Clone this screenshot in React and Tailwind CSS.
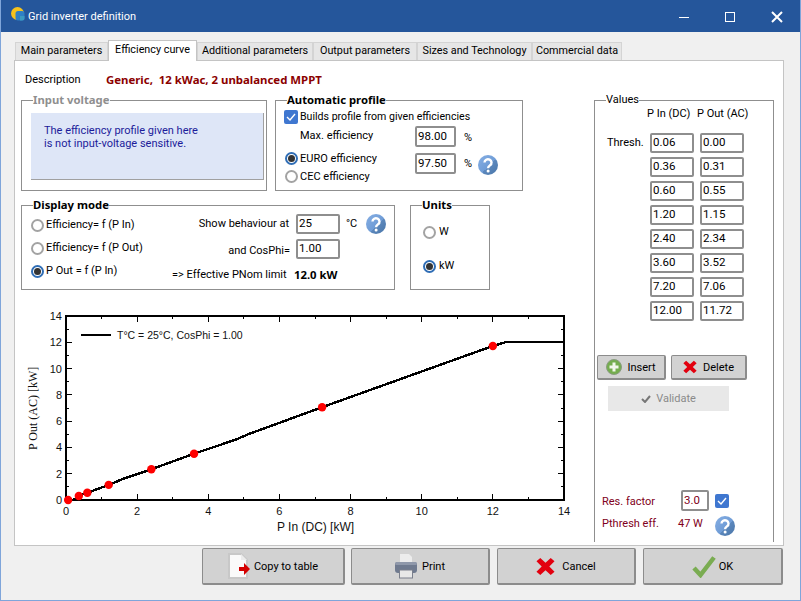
import React from "react";

const ui = { fontFamily: 'Roboto, sans-serif' };
const boldFont = { fontFamily: '"Noto Sans", sans-serif' };

const HelpIcon = () => (
  <svg width="20" height="20" viewBox="0 0 20 20" className="shrink-0">
    <defs>
      <linearGradient id="helpBg" x1="0" y1="0" x2="1" y2="1">
        <stop offset="0" stopColor="#86afe4" />
        <stop offset="0.55" stopColor="#6f9cd6" />
        <stop offset="0.55" stopColor="#5c88bd" />
        <stop offset="1" stopColor="#4a76a8" />
      </linearGradient>
    </defs>
    <circle cx="10" cy="10" r="10" fill="url(#helpBg)" />
    <path d="M6.5 7.5a3.5 3.3 0 1 1 5.6 2.7c-1.2.9-2 1.4-2 3" fill="none" stroke="#fff" strokeWidth="2.4" />
    <circle cx="10.1" cy="16" r="1.5" fill="#fff" />
  </svg>
);

const Radio = ({ on }) => (
  <span
    className={`flex h-[13px] w-[13px] shrink-0 items-center justify-center rounded-full border-2 bg-white ${
      on ? "border-[#2f6db5]" : "border-[#a3a3a3]"
    }`}
  >
    {on && <span className="h-[7px] w-[7px] rounded-full bg-[#333]" />}
  </span>
);

const CheckBox = ({ className = "" }) => (
  <span className={`flex h-[14px] w-[14px] shrink-0 items-center justify-center rounded-[2px] bg-[#3f77d0] ${className}`}>
    <svg width="10" height="8" viewBox="0 0 10 8">
      <path d="M1 4l3 3 5-6" fill="none" stroke="#fff" strokeWidth="1.4" />
    </svg>
  </span>
);

const Box = ({ value, className = "h-[20px] w-[44px]", color = "text-black" }) => (
  <div className={`flex items-center rounded-[2px] border-2 border-[#8e8e8e] bg-white pl-[1px] text-[11.5px] ${color} ${className}`}>
    {value}
  </div>
);

const Group = ({ title, className, legendClass = "font-bold", children }) => (
  <fieldset className={`border border-[#8f8f8f] ${className}`}>
    <legend
      className={`ml-[11px] h-[14px] leading-[14px] ${legendClass}`}
      style={legendClass.includes("font-normal") ? undefined : boldFont}
    >
      {title}
    </legend>
    {children}
  </fieldset>
);

const tabs = [
  ["Main parameters", "w-[93px]"],
  ["Efficiency curve", "w-[89px]"],
  ["Additional parameters", "w-[116px]"],
  ["Output parameters", "w-[104px]"],
  ["Sizes and Technology", "w-[115px]"],
  ["Commercial data", "w-[90px]"],
];

const values = [
  ["0.06", "0.00"],
  ["0.36", "0.31"],
  ["0.60", "0.55"],
  ["1.20", "1.15"],
  ["2.40", "2.34"],
  ["3.60", "3.52"],
  ["7.20", "7.06"],
  ["12.00", "11.72"],
];

// chart scale, same pixel grid as the plot frame
const px = (x) => 41 + x * (498 / 14);
const py = (y) => 195 - y * (184 / 14);

const dots = values.map(([a, b]) => [Number(a), Number(b)]);
const curve = [
  [0.2, 0], [0.36, 0.31], [0.6, 0.55], [1.2, 1.15], [1.6, 1.6], [2.4, 2.34], [3.6, 3.52],
  [4.8, 4.62], [5.1, 4.98], [7.2, 7.06], [12, 11.72], [12.35, 12], [14, 12],
];
const range = Array.from({ length: 15 }, (_, i) => i);

const Chart = () => (
  <svg width="570" height="235" viewBox="0 0 570 235" className="block">
    <g stroke="#000" strokeWidth="1" shapeRendering="crispEdges">
      {range.map((i) => {
        const len = i % 2 === 0 ? 6 : 3;
        return (
          <g key={i}>
            <line x1={px(i)} x2={px(i)} y1={195} y2={195 - len} />
            <line x1={px(i)} x2={px(i)} y1={11} y2={11 + len} />
            <line x1={41} x2={41 + len} y1={py(i)} y2={py(i)} />
            <line x1={539} x2={539 - len} y1={py(i)} y2={py(i)} />
          </g>
        );
      })}
    </g>
    <rect x="41" y="11" width="498" height="184" fill="none" stroke="#000" strokeWidth="2" shapeRendering="crispEdges" />
    <polyline
      points={curve.map(([x, y]) => `${px(x)},${py(y)}`).join(" ")}
      fill="none"
      stroke="#000"
      strokeWidth="2.4"
      shapeRendering="crispEdges"
    />
    {dots.map(([x, y]) => (
      <circle key={x} cx={px(x)} cy={py(y)} r="4.2" fill="#f00" />
    ))}
    <g fontFamily='"Liberation Sans", sans-serif' fontSize="11" fill="#111">
      {range.filter((i) => i % 2 === 0).map((i) => (
        <text key={i} x={px(i)} y="210" textAnchor="middle">{i}</text>
      ))}
      {range.filter((i) => i % 2 === 0).map((i) => (
        <text key={i} x="37" y={py(i) + 4} textAnchor="end">{i}</text>
      ))}
      <line x1="56" x2="86" y1="30" y2="30" stroke="#000" strokeWidth="2" />
      <text x="92" y="34" fontSize="10.5">T°C = 25°C, CosPhi = 1.00</text>
      <text x="252" y="226" fontSize="12">P In (DC) [kW]</text>
    </g>
    <text
      transform="translate(12 145) rotate(-90)"
      x="0"
      y="0"
      fontFamily='"Liberation Serif", serif'
      fontSize="12"
      fill="#111"
    >
      P Out (AC) [kW]
    </text>
  </svg>
);

const Btn = ({ className, icon, label, gap = "gap-[5px]" }) => (
  <button className={`flex items-center justify-center rounded-[2px] border border-r-2 border-b-2 border-[#8c8c8c] bg-[#d2d2d2] text-[11px] text-black ${gap} ${className}`}>
    {icon}
    <span className="pt-[2px]">{label}</span>
  </button>
);

const RedX = ({ size }) => (
  <svg width={size} height={size} viewBox="0 0 20 20">
    <path d="M4.5 1l5.5 5 5.5-5 4 3.500-5.500 5.500 5.500 5.500-4 3.500-5.500-5-5.500 5-4-3.500 5.500-5.500-5.500-5.500z" fill="#e2000f" />
  </svg>
);

export default function App() {
  return (
    <div
      className="flex h-[601px] w-[801px] flex-col overflow-hidden border-x border-b border-[#7fa5da] bg-[#f0f0f0] text-[11px] text-black"
      style={ui}
    >
      <div className="flex h-[32px] shrink-0 items-center bg-[#25569b] pl-[10px] pt-[2px] text-white">
        <svg width="14" height="14" viewBox="0 0 14 14" className="-mt-[6px]">
          <circle cx="6.5" cy="6.5" r="6.5" fill="#f6c21c" />
          <rect x="4.500" y="4" width="9" height="9.500" rx="2.500" fill="#2f7fc4" />
          <path d="M9 9h4.500v2a2.500 2.500 0 0 1-2.500 2.500H9z" fill="#3c9ac0" />
        </svg>
        <span className="ml-[3px] pt-[1px]">Grid inverter definition</span>
        <div className="ml-auto flex items-center">
          <span className="h-px w-[10px] bg-white" />
          <span className="ml-[36px] h-[10px] w-[10px] border border-white" />
          <svg width="12" height="12" viewBox="0 0 12 12" className="ml-[36px] mr-[17px]">
            <path d="M1 1l10 10M11 1L1 11" stroke="#fff" strokeWidth="2" />
          </svg>
        </div>
      </div>

      <div className="ml-[14px] mt-[8px] flex h-[20px] shrink-0 items-end text-[10.8px]">
        {tabs.map(([name, w], i) =>
          i === 1 ? (
            <div key={name} className={`relative z-10 -mb-px flex h-[21px] items-center justify-center whitespace-nowrap border border-b-0 border-[#c4c4c4] bg-white pb-[2px] ${w}`}>
              {name}
            </div>
          ) : (
            <div key={name} className={`flex h-[18px] items-center justify-center whitespace-nowrap border border-b-0 border-[#d4d4d4] bg-[#e6e6e6] ${w}`}>
              {name}
            </div>
          )
        )}
      </div>

      <div className="ml-[13px] flex h-[486px] w-[770px] shrink-0 border border-[#c4c4c4] bg-white">
        <div className="w-[579px] shrink-0 pl-[6px]">
          <div className="flex h-[20px] items-center pl-[4px] pt-[17px]">
            <span className="w-[81px] pt-[2px]">Description</span>
            <span className="whitespace-pre text-[11.4px] font-bold text-[#8b0000]" style={boldFont}>Generic,  12 kWac, 2 unbalanced MPPT</span>
          </div>

          <div className="mt-[12px] flex gap-[8px]">
            <Group title="Input voltage" legendClass="text-[11.3px] font-bold text-[#8f8f8f]" className="h-[98px] w-[246px]">
              <div className="ml-[9px] mt-[6px] flex h-[67px] w-[233px] flex-col justify-center border-b border-r border-[#a0a0a0] bg-[#dee6f7] pb-[18px] pl-[13px] leading-[13px] text-[#1c1c9a]">
                <span>The efficiency profile given here</span>
                <span>is not input-voltage sensitive.</span>
              </div>
            </Group>
            <Group title="Automatic profile" legendClass="text-[11.3px] font-bold" className="h-[98px] w-[248px]">
              <div className="flex items-center gap-[2px] pl-[8px] pt-[2px]">
                <CheckBox />
                <span className="text-[10.6px]">Builds profile from given efficiencies</span>
              </div>
              <div className="mt-[1px] flex h-[21px] items-center pl-[24px]">
                <span className="w-[115px]">Max. efficiency</span>
                <Box value="98.00" className="h-[21px] w-[41px]" />
                <span className="ml-[8px] pt-[3px]">%</span>
              </div>
              <div className="mt-[6px] flex">
                <div className="-mt-px flex w-[139px] flex-col gap-[4px] pl-[9px]">
                  <div className="flex h-[14px] items-center gap-[2px]"><Radio on /><span>EURO efficiency</span></div>
                  <div className="flex h-[14px] items-center gap-[2px]"><Radio /><span>CEC efficiency</span></div>
                </div>
                <Box value="97.50" className="h-[21px] w-[41px]" />
                <span className="ml-[8px] pt-[3px]">%</span>
                <span className="ml-[6px] mt-[2px]"><HelpIcon /></span>
              </div>
            </Group>
          </div>

          <div className="mt-[7px] flex gap-[15px]">
            <Group title="Display mode" legendClass="text-[11.3px] font-bold" className="h-[92px] w-[374px]">
              <div className="flex">
                <div className="flex w-[150px] flex-col gap-[8px] pl-[9px] pt-[6px]">
                  <div className="flex h-[15px] items-center gap-[2px]"><Radio /><span>Efficiency= f (P In)</span></div>
                  <div className="flex h-[15px] items-center gap-[2px]"><Radio /><span>Efficiency= f (P Out)</span></div>
                  <div className="flex h-[15px] items-center gap-[2px]"><Radio on /><span>P Out = f (P In)</span></div>
                </div>
                <div className="flex-1 pt-[2px]">
                  <div className="flex items-center">
                    <span className="w-[117px] text-right">Show behaviour at</span>
                    <Box value="25" className="ml-[7px] h-[20px] w-[44px]" />
                    <span className="ml-[6px]">°C</span>
                    <span className="ml-[9px]"><HelpIcon /></span>
                  </div>
                  <div className="mt-[4px] flex items-center">
                    <span className="w-[118px] pt-[5px] text-right">and CosPhi=</span>
                    <Box value="1.00" className="ml-[6px] h-[20px] w-[44px]" />
                  </div>
                  <div className="mt-[7px] flex items-center whitespace-nowrap">
                    <span className="w-[122px]">=&gt; Effective PNom limit</span>
                    <span className="text-[11.3px] font-bold" style={boldFont}>12.0 kW</span>
                  </div>
                </div>
              </div>
            </Group>
            <Group title="Units" legendClass="text-[11.3px] font-bold" className="h-[92px] w-[80px]">
              <div className="flex flex-col gap-[20px] pl-[12px] pt-[13px]">
                <div className="flex h-[14px] items-center gap-[3px]"><Radio /><span>W</span></div>
                <div className="flex h-[14px] items-center gap-[3px]"><Radio on /><span>kW</span></div>
              </div>
            </Group>
          </div>

          <div className="ml-[4px] mt-[15px]">
            <Chart />
          </div>
        </div>

        <Group title="Values" legendClass="text-[11px] font-normal" className="mt-[32px] h-[449px] w-[180px] border-b-0">
          <div className="flex pl-[52px] leading-[14px]">
            <span className="w-[50px]">P In (DC)</span>
            <span>P Out (AC)</span>
          </div>
          <div className="mt-[12px] grid grid-cols-[37px_44px_44px] gap-x-[6px] gap-y-[4px] pl-[12px]">
            {values.map(([a, b], i) => (
              <React.Fragment key={a}>
                <span className="whitespace-nowrap leading-[20px]">{i === 0 ? "Thresh." : ""}</span>
                <Box value={a} />
                <Box value={b} />
              </React.Fragment>
            ))}
          </div>
          <div className="ml-[2px] mt-[34px] flex gap-[5px]">
            <Btn
              className="h-[25px] w-[69px]"
              label="Insert"
              icon={
                <svg width="16" height="16" viewBox="0 0 16 16">
                  <circle cx="8" cy="8" r="7.500" fill="#74ad4e" stroke="#8a9c80" />
                  <path d="M8 3.500v9M3.500 8h9" stroke="#f1f7ea" strokeWidth="3" />
                </svg>
              }
            />
            <Btn className="h-[25px] w-[76px]" label="Delete" gap="gap-[6px]" icon={<RedX size={14} />} />
          </div>
          <div className="ml-[13px] mt-[6px] flex h-[25px] w-[121px] items-center justify-center gap-[5px] bg-[#e8e8e8] text-[#8a8a8a]">
            <svg width="10" height="8" viewBox="0 0 10 8">
              <path d="M1 4l3 3 5-6" fill="none" stroke="#777" strokeWidth="2" />
            </svg>
            <span className="pt-[2px]">Validate</span>
          </div>
          <div className="ml-[7px] mt-[79px] flex items-center text-[#800020]">
            <span className="w-[79px] pt-[4px]">Res. factor</span>
            <Box value="3.0" className="h-[21px] w-[28px]" color="text-[#800020]" />
            <CheckBox className="ml-[6px]" />
          </div>
          <div className="ml-[7px] mt-[5px] flex items-center text-[#800020]">
            <span className="w-[76px] pb-[3px]">Pthresh eff.</span>
            <span className="w-[37px] pb-[3px]">47 W</span>
            <HelpIcon />
          </div>
        </Group>
      </div>

      <div className="mt-[2px] flex justify-end gap-[7px] pr-[17px]">
        <Btn
          className="-mr-px h-[37px] w-[143px]"
          label="Copy to table"
          gap="gap-[4px]"
          icon={
            <svg width="22" height="26" viewBox="0 0 22 26">
              <path d="M1 1h12l6 6v18H1z" fill="#fafafa" stroke="#c8c8c8" strokeWidth="2" />
              <path d="M13 1v6h6" fill="#ececec" />
              <path d="M11 14h5v-4l6 6-6 6v-4h-5z" fill="#d40000" />
            </svg>
          }
        />
        <Btn
          className="h-[37px] w-[139px]"
          label="Print"
          icon={
            <svg width="22" height="26" viewBox="0 0 22 26">
              <path d="M5 1h9l3 3v6H5z" fill="#ececec" />
              <rect x="0" y="9" width="22" height="11" rx="3" fill="#6f7a8f" />
              <rect x="0" y="9" width="22" height="3" rx="1.500" fill="#8f98aa" />
              <rect x="4.500" y="17" width="13" height="8" fill="#e8e8e8" stroke="#7a7f8c" />
            </svg>
          }
        />
        <Btn className="h-[37px] w-[139px]" label="Cancel" gap="gap-[7px]" icon={<RedX size={19} />} />
        <Btn
          className="h-[37px] w-[140px]"
          label="OK"
          gap="gap-[3px]"
          icon={
            <svg width="24" height="24" viewBox="0 0 24 24">
              <path d="M2 14l6.500 7L22 3.500" fill="none" stroke="#7aac52" strokeWidth="4.500" />
            </svg>
          }
        />
      </div>
    </div>
  );
}
